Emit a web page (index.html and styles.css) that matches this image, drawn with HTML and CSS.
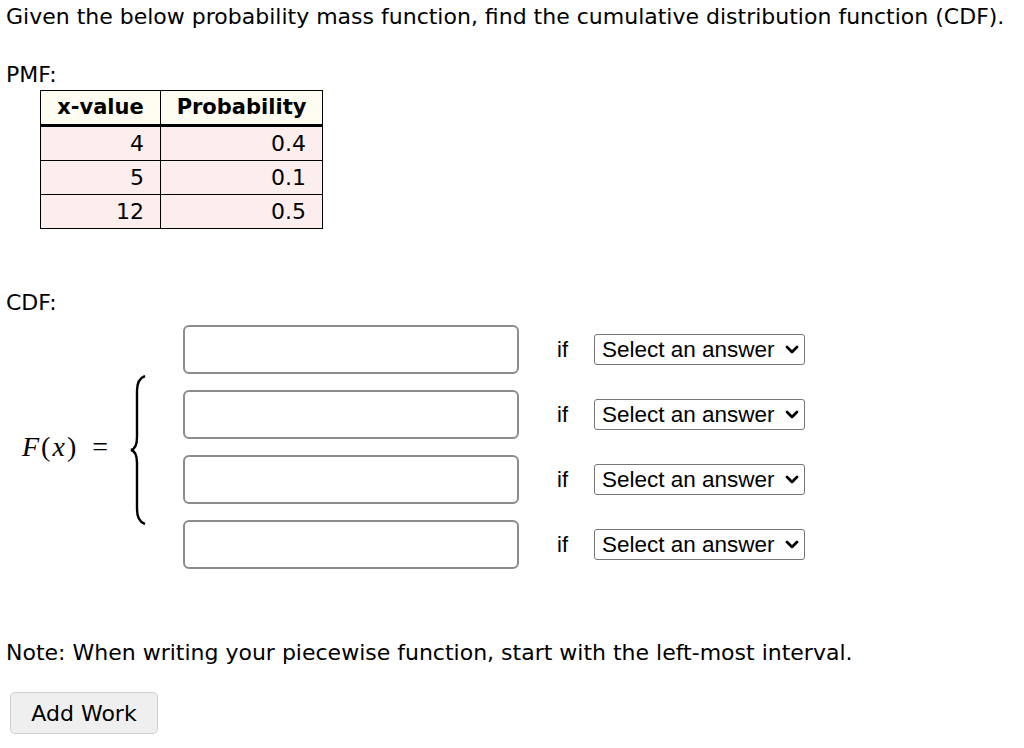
FILE: index.html
```html
<!DOCTYPE html>
<html>
<head>
<meta charset="utf-8">
<link rel="stylesheet" href="styles.css">
</head>
<body>
<div class="page">
  <p class="title">Given the below probability mass function, find the cumulative distribution function (CDF).</p>
  <p class="label pmf-label">PMF:</p>
  <table class="pmf">
    <thead>
      <tr><th class="c1">x-value</th><th class="c2">Probability</th></tr>
    </thead>
    <tbody>
      <tr><td>4</td><td>0.4</td></tr>
      <tr><td>5</td><td>0.1</td></tr>
      <tr><td>12</td><td>0.5</td></tr>
    </tbody>
  </table>
  <p class="label cdf-label">CDF:</p>
  <div class="cdf">
    <div class="lhs"><span class="fx"><i>F</i>(<i>x</i>)</span><span class="eq">=</span></div>
    <svg class="brace" width="20" height="150" viewBox="0 0 20 150">
      <path d="M15 1 C9 3 7 8 7 16 L7 62 C7 70 5 74 1 75 C5 76 7 80 7 88 L7 134 C7 142 9 147 15 149" fill="none" stroke="#000" stroke-width="2.4"/>
    </svg>
    <div class="rows">
      <div class="row"><input class="ans" type="text"><span class="if">if</span><select class="sel"><option>Select an answer</option></select></div>
      <div class="row"><input class="ans" type="text"><span class="if">if</span><select class="sel"><option>Select an answer</option></select></div>
      <div class="row"><input class="ans" type="text"><span class="if">if</span><select class="sel"><option>Select an answer</option></select></div>
      <div class="row"><input class="ans" type="text"><span class="if">if</span><select class="sel"><option>Select an answer</option></select></div>
    </div>
  </div>
  <p class="note">Note: When writing your piecewise function, start with the left-most interval.</p>
  <button class="work" type="button">Add Work</button>
</div>
</body>
</html>
```
FILE: styles.css
```css
html, body {
  margin: 0;
  padding: 0;
  background: #fff;
}
body {
  font-family: "DejaVu Sans", Verdana, sans-serif;
  color: #000;
}
.page {
  padding: 0 0 0 6px;
}
.title {
  margin: 0;
  font-size: 22px;
  line-height: 34px;
}
.label {
  margin: 0;
  font-size: 22px;
  line-height: 30px;
}
.pmf-label {
  margin-top: 26px;
}
.pmf {
  margin-left: 34px;
  border-collapse: collapse;
  font-size: 22px;
}
.pmf th, .pmf td {
  border: 1px solid #000;
  height: 33px;
  padding: 0 16px;
  line-height: 1;
}
.pmf th {
  background: #fffdf2;
  font-weight: bold;
  font-size: 21px;
  text-align: center;
  border-bottom: 3px solid #000;
  padding: 0 10px;
}
.pmf .c1 { width: 99px; }
.pmf .c2 { width: 141px; }
.pmf td {
  background: #fdeeee;
  text-align: right;
}
.cdf-label {
  margin-top: 59px;
}
.cdf {
  display: flex;
  align-items: center;
  margin-top: 7px;
}
.lhs {
  display: flex;
  align-items: center;
  margin-left: 16px;
  font-family: "Liberation Serif", "DejaVu Serif", serif;
  font-size: 28px;
}
.fx {
  letter-spacing: 2px;
}
.fx i { font-style: italic; }
.eq { margin-left: 14px; }
.brace {
  margin-left: 22px;
  margin-top: 6px;
}
.rows {
  display: flex;
  flex-direction: column;
  gap: 16px;
  margin-left: 33px;
}
.row {
  display: flex;
  align-items: center;
}
.ans {
  width: 336px;
  height: 49px;
  box-sizing: border-box;
  border: 2px solid #8c8c8c;
  border-radius: 6px;
  margin: 0;
  background: #fff;
}
.if {
  font-family: "Liberation Sans", Arial, sans-serif;
  font-size: 22px;
  margin-left: 38px;
  width: 37px;
}
.sel {
  appearance: none;
  -webkit-appearance: none;
  font-family: "Liberation Sans", Arial, sans-serif;
  font-size: 22.5px;
  width: 211px;
  height: 31px;
  border: 1px solid #767676;
  border-radius: 3px;
  background-color: #fff;
  background-image: url("data:image/svg+xml,%3Csvg xmlns='http://www.w3.org/2000/svg' width='14' height='10' viewBox='0 0 14 10'%3E%3Cpath d='M2 2 L7 7 L12 2' fill='none' stroke='%23000' stroke-width='2.8' stroke-linecap='round' stroke-linejoin='round'/%3E%3C/svg%3E");
  background-repeat: no-repeat;
  background-position: right 5px center;
  color: #000;
  padding: 0 4px 0 7px;
  margin: 0;
}
.note {
  margin: 69px 0 0 0;
  font-size: 22px;
  line-height: 30px;
}
.work {
  margin: 24px 0 0 4px;
  width: 148px;
  height: 42px;
  background: #efefef;
  border: 1px solid #cfcfcf;
  border-radius: 5px;
  font-family: "DejaVu Sans", Verdana, sans-serif;
  font-size: 22px;
  color: #000;
}
```
